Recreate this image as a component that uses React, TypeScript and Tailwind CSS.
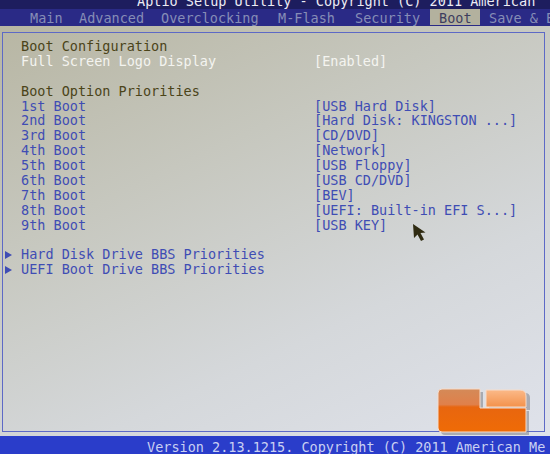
import React from 'react';

const TABS = [
  { label: 'Main', w: 'w-[49px]' },
  { label: 'Advanced', w: 'w-[82px]' },
  { label: 'Overclocking', w: 'w-[117px]' },
  { label: 'M-Flash', w: 'w-[77px]' },
  { label: 'Security', w: 'w-[84px]' },
  { label: 'Boot', w: 'w-[50px]', active: true },
  { label: 'Save & E', w: 'w-[70px]' },
];

const BOOT_ORDER = [
  ['1st Boot', '[USB Hard Disk]'],
  ['2nd Boot', '[Hard Disk: KINGSTON ...]'],
  ['3rd Boot', '[CD/DVD]'],
  ['4th Boot', '[Network]'],
  ['5th Boot', '[USB Floppy]'],
  ['6th Boot', '[USB CD/DVD]'],
  ['7th Boot', '[BEV]'],
  ['8th Boot', '[UEFI: Built-in EFI S...]'],
  ['9th Boot', '[USB KEY]'],
];

function Row({ label, value, labelClass, valueClass }: { label?: string; value?: string; labelClass?: string; valueClass?: string }) {
  return (
    <div className="flex h-[14.9px] leading-[15px] whitespace-pre">
      <span className={`w-[309px] pl-[16px] ${labelClass ?? ''}`}>{label ?? ''}</span>
      <span className={valueClass}>{value ?? ''}</span>
    </div>
  );
}

function SubMenu({ label }: { label: string }) {
  return (
    <div className="flex h-[14.9px] leading-[15px] items-center whitespace-pre text-[#3f4db4]">
      <span className="w-[16px] flex items-center">
        <svg width="7" height="8" viewBox="0 0 7 8">
          <path d="M0 0 L7 4 L0 8 Z" fill="#3f4db4" />
        </svg>
      </span>
      <span>{label}</span>
    </div>
  );
}

// legit reviews watermark, sits over the panel corner
function Logo() {
  return (
    <svg className="absolute left-[434px] top-[386px]" width="100" height="52" viewBox="0 0 100 52">
      <defs>
        <linearGradient id="lg1" x1="0" y1="0" x2="0" y2="1">
          <stop offset="0" stopColor="#d48a58" />
          <stop offset="0.36" stopColor="#e0804a" />
          <stop offset="0.42" stopColor="#e8660f" />
          <stop offset="1" stopColor="#ef6b06" />
        </linearGradient>
        <linearGradient id="lg2" x1="0" y1="0" x2="0" y2="1">
          <stop offset="0" stopColor="#fbb988" />
          <stop offset="1" stopColor="#f3924c" />
        </linearGradient>
      </defs>
      <path d="M7 6 h42 v19 h46 v24 h-84 q-4 0 -4 -4 v-35 q0 -4 4 -4 z" fill="#7d7f86" opacity="0.55" />
      <path d="M55 7 h36 q5 0 5 5 v12 h-41 z" fill="#7d7f86" opacity="0.55" />
      <path d="M8 3 h38 v19 h46 v24 h-84 q-4 0 -4 -4 v-35 q0 -4 4 -4 z" fill="url(#lg1)" stroke="#f6dccb" strokeWidth="1" />
      <path d="M52 4 h34 q6 0 6 6 v11 h-40 z" fill="url(#lg2)" stroke="#f6dccb" strokeWidth="1" />
    </svg>
  );
}

function Cursor() {
  return (
    <svg className="absolute left-[412px] top-[223px]" width="16" height="20" viewBox="0 0 16 20">
      <path d="M1 1 L2 15 L5.5 11.5 L9 18 L12 16.5 L8.5 10 L13.5 9.5 Z" fill="#2f2b12" />
    </svg>
  );
}

export default function App() {
  return (
    <div className="relative w-[550px] h-[454px] overflow-hidden flex flex-col font-['DejaVu_Sans_Mono','Liberation_Mono',monospace] text-[13.5px] bg-[linear-gradient(155deg,#b6b4a0_0%,#c6c7be_35%,#d5d8db_68%,#e0e3ec_100%)]">
      {/* title strip, cut off by the photo */}
      <div className="h-[9px] overflow-hidden bg-[#1d1d5e]">
        <div className="-mt-[6px] pl-[137px] leading-[15px] whitespace-pre text-[#ececf4]">
          Aptio Setup Utility - Copyright (C) 2011 American
        </div>
      </div>

      {/* tabs */}
      <div className="h-[17px] flex bg-[#2a2a86] pl-[21px] whitespace-pre">
        {TABS.map((t) => (
          <div
            key={t.label}
            className={`${t.w} shrink-0 h-[16px] pl-[9px] pt-[2px] leading-[15px] ${t.active ? 'bg-[#b3b19e] text-[#3e3e5e]' : 'text-[#868db6]'}`}
          >
            {t.label}
          </div>
        ))}
      </div>

      {/* main panel */}
      <div className="flex-1 pt-[6px] pl-[2px] pr-[5px] pb-[4px]">
        <div className="h-full border border-[#5d69c6] pl-[2px] pt-[6px]">
          <Row label="Boot Configuration" labelClass="text-[#4b4419]" />
          <Row label="Full Screen Logo Display" value="[Enabled]" labelClass="text-[#f4f4f0]" valueClass="text-[#f4f4f0]" />
          <Row />
          <Row label="Boot Option Priorities" labelClass="text-[#4b4419]" />
          {BOOT_ORDER.map(([l, v]) => (
            <Row key={l} label={l} value={v} labelClass="text-[#3f4db4]" valueClass="text-[#3f4db4]" />
          ))}
          <Row />
          <SubMenu label="Hard Disk Drive BBS Priorities" />
          <SubMenu label="UEFI Boot Drive BBS Priorities" />
        </div>
      </div>

      {/* footer */}
      <div className="h-[18px] bg-[#2a3dca] pl-[147px] pt-[4px] leading-[15px] whitespace-pre text-[#c9d0f2] overflow-hidden">
        Version 2.13.1215. Copyright (C) 2011 American Me
      </div>

      <Cursor />
      <Logo />
    </div>
  );
}
